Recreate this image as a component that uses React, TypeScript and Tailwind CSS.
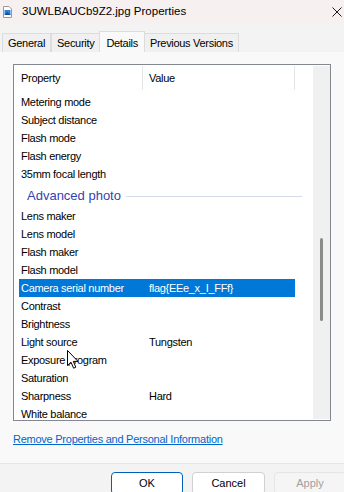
import React from "react";

type Row = { name: string; value?: string; selected?: boolean };

const before: Row[] = [
  { name: "Metering mode" },
  { name: "Subject distance" },
  { name: "Flash mode" },
  { name: "Flash energy" },
  { name: "35mm focal length" },
];

const advanced: Row[] = [
  { name: "Lens maker" },
  { name: "Lens model" },
  { name: "Flash maker" },
  { name: "Flash model" },
  { name: "Camera serial number", value: "flag{EEe_x_I_FFf}", selected: true },
  { name: "Contrast" },
  { name: "Brightness" },
  { name: "Light source", value: "Tungsten" },
  { name: "Exposure program" },
  { name: "Saturation" },
  { name: "Sharpness", value: "Hard" },
  { name: "White balance" },
];

const PropRow = ({ row }: { row: Row }) => (
  <div
    className={`ml-[5px] w-[276px] h-[18px] shrink-0 flex items-center whitespace-nowrap ${
      row.selected ? "bg-[#0078d7] text-white" : "text-black"
    }`}
  >
    <span className="w-[130px] pl-[2px]">{row.name}</span>
    <span>{row.value}</span>
  </div>
);

const Tab = ({ label, active }: { label: string; active?: boolean }) =>
  active ? (
    <div className="h-[21px] px-[6px] flex items-start pt-[3px] bg-[#f9f9f9] border border-b-0 border-[#dcdcdc] -mx-[1px] relative">
      {label}
    </div>
  ) : (
    <div className="h-[19px] px-[5px] flex items-center bg-[#f0f0f0] border border-b-0 border-[#dcdcdc]">
      {label}
    </div>
  );

export default function App() {
  return (
    <div className="w-[344px] h-[492px] overflow-hidden relative bg-[#f9f9f9] flex flex-col font-['Liberation_Sans',Arial,sans-serif] text-[11px] tracking-[-0.3px]">
      {/* title bar */}
      <div className="h-[24px] shrink-0 bg-[#f6f0f0] flex items-center pl-[3px] pr-[1px]">
        <svg width="9" height="12" viewBox="0 0 9 12">
          <path d="M0.5 0.5 H6 L8.5 3 V11.5 H0.5 Z" fill="#fff" stroke="#9a9a9a" />
          <rect x="1.5" y="4" width="6" height="5" fill="#2f7fd6" />
          <path d="M1.5 9 L4 6 L7.5 8.5 V9 Z" fill="#1b4f9a" />
        </svg>
        <span className="ml-[10px] text-[11.5px] tracking-normal text-black">
          3UWLBAUCb9Z2.jpg Properties
        </span>
        <svg className="ml-auto mr-[1px]" width="10" height="10" viewBox="0 0 10 10">
          <path d="M0.5 0.5 L9.5 9.5 M9.5 0.5 L0.5 9.5" stroke="#1a1a1a" strokeWidth="1" />
        </svg>
      </div>

      {/* tabs */}
      <div className="h-[28px] shrink-0 bg-[#f3f3f3] flex items-end pl-[2px] text-black">
        <Tab label="General" />
        <Tab label="Security" />
        <Tab label="Details" active />
        <Tab label="Previous Versions" />
      </div>

      {/* panel */}
      <div className="flex-1 flex flex-col px-[13px] pt-[12px]">
        <div className="h-[357px] shrink-0 border border-[#828790] bg-white flex overflow-hidden">
          <div className="flex-1 flex flex-col overflow-hidden">
            <div className="h-[26px] shrink-0 flex items-stretch">
              <div className="w-[128px] pl-[7px] flex items-center">Property</div>
              <div className="w-px my-[1px] bg-[#e5e5e5]" />
              <div className="w-[151px] pl-[6px] flex items-center">Value</div>
              <div className="w-px my-[1px] bg-[#e5e5e5]" />
            </div>
            <div className="h-[2px] shrink-0" />
            {before.map((r) => (
              <PropRow key={r.name} row={r} />
            ))}
            <div className="h-[24px] shrink-0 flex items-center pt-[2px] pl-[13px] pr-[11px]">
              <span className="text-[13px] tracking-normal text-[#3344b0] whitespace-nowrap">
                Advanced photo
              </span>
              <div className="flex-1 ml-[5px] h-px bg-[#d5dce8]" />
            </div>
            {advanced.map((r) => (
              <PropRow key={r.name} row={r} />
            ))}
          </div>
          <div className="w-[17px] shrink-0 my-[1px] bg-[#f0f0f0] pt-[172px]">
            <div className="ml-[7px] w-[3px] h-[83px] rounded-full bg-[#8a8a8a]" />
          </div>
        </div>

        <a className="mt-[12px] leading-[12px] text-[#0066cc] underline tracking-[-0.25px] self-start">
          Remove Properties and Personal Information
        </a>
      </div>

      {/* bottom bar */}
      <div className="h-[29px] shrink-0 border-t border-[#e5e5e5] bg-[#f3f3f3] flex justify-end items-start pt-[8px] -mr-[2px] gap-[9px]">
        <button className="w-[72px] h-[23px] shrink-0 rounded-[4px] border border-[#005fb8] bg-white text-black tracking-normal">
          OK
        </button>
        <button className="w-[73px] h-[23px] shrink-0 rounded-[4px] border border-[#d0d0d0] bg-white text-black tracking-normal">
          Cancel
        </button>
        <button className="w-[72px] h-[23px] shrink-0 rounded-[4px] border border-[#e5e5e5] bg-[#f5f5f5] text-[#a0a0a0] tracking-normal">
          Apply
        </button>
      </div>

      {/* mouse pointer */}
      <svg className="absolute left-[67px] top-[350px]" width="12" height="19" viewBox="0 0 12 19">
        <path
          d="M0.5 0.5 L0.5 15.5 L4 12.2 L6.6 18.2 L8.8 17.2 L6.3 11.4 L11 11.4 Z"
          fill="#fff"
          stroke="#000"
          strokeWidth="1"
          strokeLinejoin="round"
        />
      </svg>
    </div>
  );
}
